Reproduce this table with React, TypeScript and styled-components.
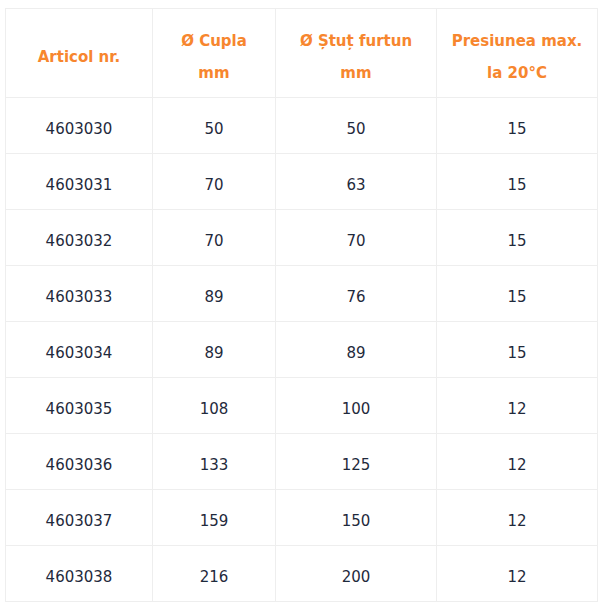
import React from "react";
import styled, { createGlobalStyle } from "styled-components";

const Global = createGlobalStyle`
  html, body { margin: 0; padding: 0; background: #ffffff; }
  body { font-family: "DejaVu Sans", Verdana, sans-serif; }
`;

const Page = styled.div`
  padding: 8px 0 0 5px;
`;

const Table = styled.table`
  border-collapse: collapse;
  table-layout: fixed;
  width: 592px;
  font-size: 15px;
`;

const Col = styled.col<{ $w: number }>`
  width: ${(p) => p.$w}px;
`;

const Head = styled.th`
  border: 1px solid #eeeeee;
  color: #f7862e;
  font-weight: bold;
  line-height: 32px;
  padding: 16px 4px 8px;
  height: 88px;
  box-sizing: border-box;
  text-align: center;
  vertical-align: middle;
`;

const Cell = styled.td`
  border: 1px solid #eeeeee;
  color: #1f2a3c;
  line-height: 32px;
  padding: 6px 4px 0;
  height: 56px;
  box-sizing: border-box;
  text-align: center;
  vertical-align: middle;
`;

const widths = [147, 123, 161, 161];

const rows: [string, string, string, string][] = [
  ["4603030", "50", "50", "15"],
  ["4603031", "70", "63", "15"],
  ["4603032", "70", "70", "15"],
  ["4603033", "89", "76", "15"],
  ["4603034", "89", "89", "15"],
  ["4603035", "108", "100", "12"],
  ["4603036", "133", "125", "12"],
  ["4603037", "159", "150", "12"],
  ["4603038", "216", "200", "12"],
];

export default function App() {
  return (
    <Page>
      <Global />
      <Table>
        <colgroup>
          {widths.map((w, i) => (
            <Col key={i} $w={w} />
          ))}
        </colgroup>
        <thead>
          <tr>
            <Head>Articol nr.</Head>
            <Head>Ø Cupla<br />mm</Head>
            <Head>Ø Ștuț furtun<br />mm</Head>
            <Head>Presiunea max.<br />la 20°C</Head>
          </tr>
        </thead>
        <tbody>
          {rows.map((r) => (
            <tr key={r[0]}>
              {r.map((c, i) => (
                <Cell key={i}>{c}</Cell>
              ))}
            </tr>
          ))}
        </tbody>
      </Table>
    </Page>
  );
}
